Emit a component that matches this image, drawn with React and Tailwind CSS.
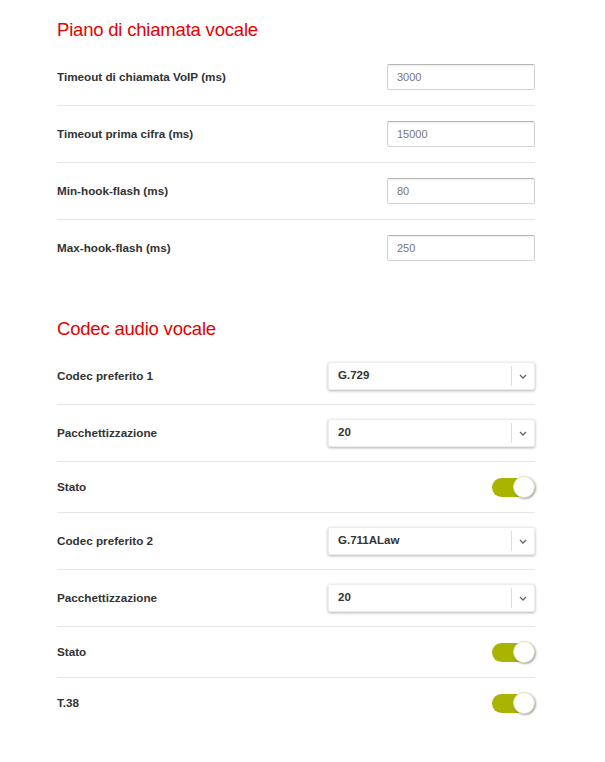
import React from 'react';

const inputRows = [
  { label: 'Timeout di chiamata VoIP (ms)', value: '3000' },
  { label: 'Timeout prima cifra (ms)', value: '15000' },
  { label: 'Min-hook-flash (ms)', value: '80' },
  { label: 'Max-hook-flash (ms)', value: '250' },
];

const codecRows = [
  { label: 'Codec preferito 1', type: 'select', value: 'G.729' },
  { label: 'Pacchettizzazione', type: 'select', value: '20' },
  { label: 'Stato', type: 'toggle' },
  { label: 'Codec preferito 2', type: 'select', value: 'G.711ALaw' },
  { label: 'Pacchettizzazione', type: 'select', value: '20' },
  { label: 'Stato', type: 'toggle' },
  { label: 'T.38', type: 'toggle' },
];

function Heading({ children }) {
  return (
    <h2 className="text-[18.5px] leading-[24px] text-[#e60000] mb-[7px] tracking-[-0.2px]">{children}</h2>
  );
}

function Label({ children }) {
  return <span className="text-[11.7px] font-bold text-[#333]">{children}</span>;
}

function TextBox({ value }) {
  return (
    <div className="w-[148px] h-[26px] flex items-center px-[9px] border border-[#d4d4d4] border-t-[#b5b5b5] rounded-[2px] bg-white shadow-[inset_0_1px_2px_rgba(0,0,0,0.08)] text-[11px] text-[#777]">
      {value}
    </div>
  );
}

function Select({ value }) {
  return (
    <div className="w-[207px] h-[28px] flex items-center rounded-[2px] bg-white border border-[#ececec] shadow-[0_1px_3px_rgba(0,0,0,0.3)]">
      <span className="flex-1 px-[9px] text-[11.5px] font-bold text-[#333]">{value}</span>
      <div className="w-[23px] h-[20px] flex items-center justify-center border-l border-[#ddd]">
        <svg width="8" height="5" viewBox="0 0 8 5" fill="none">
          <path d="M1 1l3 3 3-3" stroke="#666" strokeWidth="1.3" />
        </svg>
      </div>
    </div>
  );
}

function Toggle() {
  return (
    <div className="relative w-[43px] h-[22px]">
      <div className="absolute left-0 top-[2px] w-[42px] h-[19px] rounded-full bg-[#a8b400]" />
      <div className="absolute right-0 top-0 w-[22px] h-[22px] rounded-full bg-white border border-[#e2e2c8] shadow-[1px_1px_2px_rgba(0,0,0,0.35)]" />
    </div>
  );
}

export default function App() {
  return (
    <div className="min-h-[762px] bg-white font-['Liberation_Sans',Arial,sans-serif]">
      <div className="w-[478px] ml-[57px] pt-[18px]">
        <Heading>Piano di chiamata vocale</Heading>
        <div>
          {inputRows.map((r, i) => (
            <div
              key={r.label}
              className={`flex items-center justify-between py-[15px] ${i < inputRows.length - 1 ? 'border-b border-[#e6e6e6]' : 'pb-[16px]'}`}
            >
              <Label>{r.label}</Label>
              <TextBox value={r.value} />
            </div>
          ))}
        </div>

        <div className="mt-[40px]">
          <Heading>Codec audio vocale</Heading>
          {codecRows.map((r, i) => (
            <div
              key={i}
              className={`flex items-center justify-between py-[14px] ${i < codecRows.length - 1 ? 'border-b border-[#e6e6e6]' : ''}`}
            >
              <Label>{r.label}</Label>
              {r.type === 'select' ? <Select value={r.value} /> : <Toggle />}
            </div>
          ))}
        </div>
      </div>
    </div>
  );
}
